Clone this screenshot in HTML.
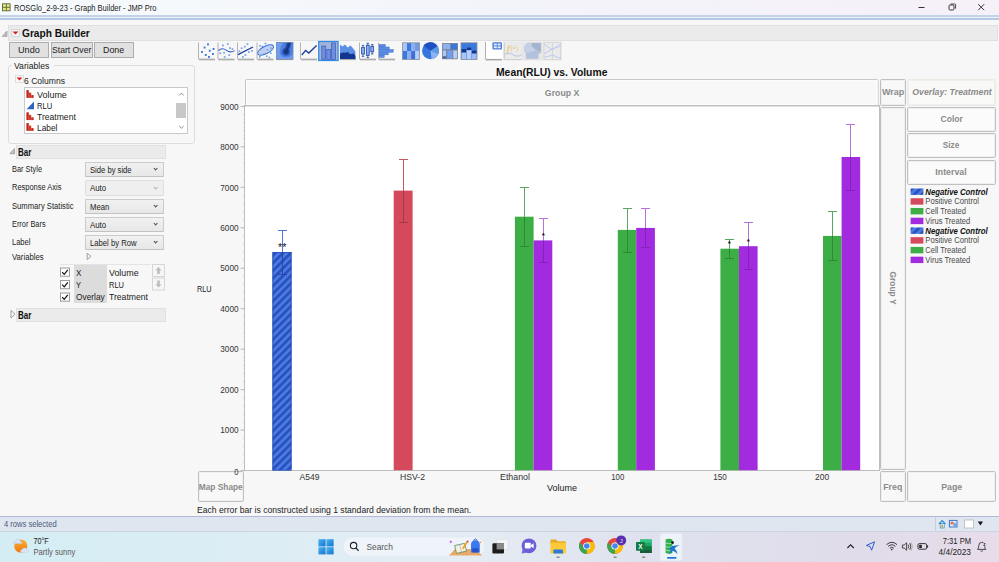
<!DOCTYPE html>
<html>
<head>
<meta charset="utf-8">
<title>ROSGlo_2-9-23 - Graph Builder - JMP Pro</title>
<style>
*{box-sizing:border-box;margin:0;padding:0}
html,body{width:999px;height:562px;overflow:hidden;background:#f7f7f7;font-family:"Liberation Sans",sans-serif;color:#222}
#root{position:absolute;left:0;top:0;width:999px;height:562px;overflow:hidden}
.abs{position:absolute}
.t{position:absolute;white-space:nowrap;line-height:1}
.sx{display:inline-block;transform-origin:0 50%;white-space:nowrap}
#titlebar{left:0;top:0;width:999px;height:15px;background:linear-gradient(90deg,#f7fbfd 0%,#f3f4fa 50%,#f6f0f8 100%)}
#tline{left:0;top:14.5px;width:999px;height:5px;background:linear-gradient(180deg,#c3d3e8 0%,#c3d3e8 30%,#eef3f8 31%,#eef3f8 60%,#b3c8e2 61%,#b3c8e2 100%)}
#content{left:0;top:19.5px;width:999px;height:497px;background:#f7f7f7}
.hdr{position:absolute;background:#ebebeb;border:1px solid #e0e0e0}
.btn .sx{position:absolute;top:-0.2px}
.btn{position:absolute;height:15.6px;top:42.4px;background:#e1e1e1;border:1px solid #adadad;font-size:9.6px;text-align:left;line-height:13.6px;color:#222;white-space:nowrap;overflow:hidden}
.dd{position:absolute;left:85px;width:79px;height:15.2px;background:linear-gradient(#f1f1f1,#e7e7e7);border:1px solid #cbcbcb;border-bottom-color:#c2c2c2;border-radius:1px;font-size:8.5px;line-height:14.2px;padding-left:4.4px;color:#222}
.dd:after{content:"";position:absolute;right:6px;top:4.2px;width:2.3px;height:2.3px;border-right:0.8px solid #505050;border-bottom:0.8px solid #505050;transform:rotate(45deg)}
.dd.dis{background:#efefef;border-color:#dedede}.dd.dis:after{border-color:#b5b5b5}
.lbl{position:absolute;left:12px;font-size:8.5px;color:#222;white-space:nowrap;line-height:1}
.zone{position:absolute;border-radius:1.5px;background:#f8f8f8;border:1px solid #c0c0c0;box-shadow:inset 0 0 0 1px #efefef;color:#8a8a8a;font-weight:bold;font-size:9px;display:flex;align-items:center;justify-content:center;white-space:nowrap;padding-bottom:1px}
#status{left:0;top:516px;width:999px;height:15px;background:#e0e6f0;border-top:1px solid #b0b8da}
#taskbar{left:0;top:531px;width:999px;height:31px;background:linear-gradient(90deg,#d4edf4 0%,#dcedf4 25%,#e4edf4 45%,#dfe2ee 65%,#e0dcea 85%,#e8dcea 100%);border-top:1px solid #ccd4e0}
</style>
</head>
<body>
<div id="root">
<div id="titlebar" class="abs"></div>
<div id="tline" class="abs"></div>
<div id="content" class="abs"></div>
<!--TITLE-->
<!--LEFT-->
<!-- title bar -->
<svg class="abs" style="left:2px;top:3px" width="10" height="10" viewBox="0 0 10 10"><rect x="0.5" y="0.8" width="7.6" height="7" fill="#e6ea8a" stroke="#5a6430" stroke-width="0.9"/><path d="M0.5 4.3H8.1M4.3 0.8V7.8" stroke="#5a6430" stroke-width="0.9"/></svg>
<div class="t" style="left:14px;top:3.6px;font-size:8.5px;color:#222"><span class="sx" style="transform:scaleX(0.8848)">ROSGlo_2-9-23 - Graph Builder - JMP Pro</span></div>
<svg class="abs" style="left:910px;top:0" width="89" height="16" viewBox="0 0 89 16" fill="none" stroke="#333" stroke-width="1"><path d="M8.5 7.5H14.5"/><rect x="39" y="5" width="5" height="5" rx="1.2"/><path d="M40.5 4H44.6Q45.6 4 45.6 5V8.6" stroke-width="0.9"/><path d="M68.2 4.2L74.2 10.2M74.2 4.2L68.2 10.2"/></svg>
<!-- graph builder header -->
<div class="hdr" style="left:8px;top:25px;width:990px;height:15.6px"></div>
<svg class="abs" style="left:0;top:28px" width="22" height="12" viewBox="0 0 22 12"><path d="M2.2 8.4L7 3V8.4Z" fill="#bcbcbc" stroke="#8e8e8e" stroke-width="0.6"/><rect x="11.5" y="1.5" width="8" height="7" fill="#f4f4f4" stroke="#d8d8d8"/><path d="M12.6 3.6H18.4L15.5 6.6Z" fill="#d81e1e"/></svg>
<div class="t" style="left:21.6px;top:28.2px;font-size:10.6px;font-weight:bold;color:#111"><span class="sx" style="transform:scaleX(0.9598)">Graph Builder</span></div>
<div class="btn" style="left:9px;width:40px"><span class="sx" style="transform:scaleX(0.9504);left:7.8px">Undo</span></div>
<div class="btn" style="left:51px;width:42px"><span class="sx" style="transform:scaleX(0.8989);left:0.2px">Start Over</span></div>
<div class="btn" style="left:94px;width:40px"><span class="sx" style="transform:scaleX(0.9243);left:8.2px">Done</span></div>
<!-- variables group -->
<div class="abs" style="left:8px;top:65px;width:187px;height:79px;border:1px solid #dcdcdc;border-radius:3px"></div>
<div class="t" style="left:11.6px;top:60.8px;font-size:9.4px;background:#f7f7f7;padding:0 2px;color:#222"><span class="sx" style="transform:scaleX(0.9221)">Variables</span></div>
<svg class="abs" style="left:15px;top:75px" width="9" height="9" viewBox="0 0 9 9"><rect x="0.5" y="0.5" width="8" height="7" fill="#f7f7f7" stroke="#dedede"/><path d="M1.6 2.4H7.4L4.5 5.4Z" fill="#d81e1e"/></svg>
<div class="t" style="left:24px;top:76px;font-size:9.4px;color:#222"><span class="sx" style="transform:scaleX(0.9149)">6 Columns</span></div>
<div class="abs" style="left:24px;top:87px;width:164px;height:47px;background:#fff;border:1px solid #c9c9c9"></div>
<div class="abs" style="left:176px;top:103px;width:10px;height:15px;background:#c8c8c8"></div>
<svg class="abs" style="left:176px;top:88px" width="11" height="45" viewBox="0 0 11 45" fill="none" stroke="#777" stroke-width="0.9"><path d="M3.2 7.4L5.4 5.2L7.6 7.4"/><path d="M3.2 38L5.4 40.2L7.6 38"/></svg>
<svg class="abs" style="left:26px;top:89px" width="10" height="44" viewBox="0 0 10 44">
<path d="M0.4 1.1H2.8V8.9H0.4Z" fill="#c4241a"/><path d="M2.8 3.6H5.2V8.9H2.8Z" fill="#d03a28"/><path d="M5.2 6.1H7.6V8.9H5.2Z" fill="#c4241a"/><path d="M0.4 23.3H2.8V31.1H0.4Z" fill="#c4241a"/><path d="M2.8 25.8H5.2V31.1H2.8Z" fill="#d03a28"/><path d="M5.2 28.3H7.6V31.1H5.2Z" fill="#c4241a"/><path d="M0.4 34.1H2.8V41.9H0.4Z" fill="#c4241a"/><path d="M2.8 36.6H5.2V41.9H2.8Z" fill="#d03a28"/><path d="M5.2 39.1H7.6V41.9H5.2Z" fill="#c4241a"/>
<path d="M0.6 20.2L8 12.4V20.2Z" fill="#2f63c0"/></svg>
<div class="t" style="left:37px;top:90px;font-size:9.4px"><span class="sx" style="transform:scaleX(0.9526)">Volume</span></div>
<div class="t" style="left:37px;top:101px;font-size:9.4px"><span class="sx" style="transform:scaleX(0.8100)">RLU</span></div>
<div class="t" style="left:37px;top:112px;font-size:9.4px"><span class="sx" style="transform:scaleX(0.9156)">Treatment</span></div>
<div class="t" style="left:37px;top:123px;font-size:9.4px"><span class="sx" style="transform:scaleX(0.8888)">Label</span></div>
<!-- Bar section -->
<div class="hdr" style="left:16px;top:145px;width:150px;height:14px"></div>
<svg class="abs" style="left:9px;top:147px" width="8" height="9" viewBox="0 0 8 9"><path d="M0.8 6.8L5.6 1.4V6.8Z" fill="#bcbcbc" stroke="#8e8e8e" stroke-width="0.6"/></svg>
<div class="t" style="left:18px;top:147.8px;font-size:10.4px;font-weight:bold;color:#111"><span class="sx" style="transform:scaleX(0.7733)">Bar</span></div>
<div class="lbl" style="top:165.4px"><span class="sx" style="transform:scaleX(0.8696)">Bar Style</span></div><div class="dd" style="top:162.1px"><span class="sx" style="transform:scaleX(0.8982)">Side by side</span></div>
<div class="lbl" style="top:183.2px"><span class="sx" style="transform:scaleX(0.8785)">Response Axis</span></div><div class="dd dis" style="top:180.4px"><span class="sx" style="transform:scaleX(0.9257)">Auto</span></div>
<div class="lbl" style="top:201.5px"><span class="sx" style="transform:scaleX(0.8993)">Summary Statistic</span></div><div class="dd" style="top:198.7px"><span class="sx" style="transform:scaleX(0.9029)">Mean</span></div>
<div class="lbl" style="top:219.5px"><span class="sx" style="transform:scaleX(0.8674)">Error Bars</span></div><div class="dd" style="top:217px"><span class="sx" style="transform:scaleX(0.9257)">Auto</span></div>
<div class="lbl" style="top:237.5px"><span class="sx" style="transform:scaleX(0.8841)">Label</span></div><div class="dd" style="top:235.2px"><span class="sx" style="transform:scaleX(0.9046)">Label by Row</span></div>
<div class="lbl" style="top:252.5px"><span class="sx" style="transform:scaleX(0.9077)">Variables</span></div>
<svg class="abs" style="left:86px;top:252px" width="7" height="9" viewBox="0 0 7 9"><path d="M1.2 1.2L5 4.4L1.2 7.6Z" fill="#f8f8f8" stroke="#8a8a8a" stroke-width="0.8"/></svg>
<div class="abs" style="left:60px;top:264px;width:91px;height:1px;background:#e4e4e4"></div>
<div class="abs" style="left:74px;top:265px;width:33px;height:38px;background:#dcdcdc"></div>
<svg class="abs" style="left:60px;top:266.5px" width="10" height="36" viewBox="0 0 10 36" fill="none"><g stroke="#9c9c9c" fill="#fff"><rect x="0.5" y="1" width="9" height="8.2"/><rect x="0.5" y="13.5" width="9" height="8.2"/><rect x="0.5" y="26" width="9" height="8.2"/></g><g stroke="#111" stroke-width="1.2"><path d="M2.2 5.2L4.2 7.4L7.8 2.8"/><path d="M2.2 17.7L4.2 19.9L7.8 15.3"/><path d="M2.2 30.2L4.2 32.4L7.8 27.8"/></g></svg>
<div class="t" style="left:76px;top:268.0px;font-size:9.6px"><span class="sx" style="transform:scaleX(0.8429)">X</span></div><div class="t" style="left:109px;top:268.0px;font-size:9.6px"><span class="sx" style="transform:scaleX(0.9250)">Volume</span></div>
<div class="t" style="left:76px;top:280.0px;font-size:9.6px"><span class="sx" style="transform:scaleX(0.7805)">Y</span></div><div class="t" style="left:109px;top:280.0px;font-size:9.6px"><span class="sx" style="transform:scaleX(0.7811)">RLU</span></div>
<div class="t" style="left:76px;top:292.3px;font-size:9.6px"><span class="sx" style="transform:scaleX(0.8711)">Overlay</span></div><div class="t" style="left:109px;top:292.3px;font-size:9.6px"><span class="sx" style="transform:scaleX(0.8991)">Treatment</span></div>
<svg class="abs" style="left:152px;top:263.5px" width="14" height="27" viewBox="0 0 14 27"><g fill="#f6f6f6" stroke="#d6d6d6"><rect x="0.5" y="0.5" width="12" height="12"/><rect x="0.5" y="14" width="12" height="12"/></g><g fill="#bdbdbd"><path d="M6.5 3L9.6 6.4H7.8V10H5.2V6.4H3.4Z"/><path d="M6.5 23.6L9.6 20.2H7.8V16.6H5.2V20.2H3.4Z"/></g></svg>
<div class="hdr" style="left:16px;top:308px;width:150px;height:14px"></div>
<svg class="abs" style="left:9px;top:309px" width="8" height="11" viewBox="0 0 8 11"><path d="M2 1.4L6 5.2L2 9Z" fill="#f8f8f8" stroke="#8a8a8a" stroke-width="0.8"/></svg>
<div class="t" style="left:18px;top:310.6px;font-size:10.4px;font-weight:bold;color:#111"><span class="sx" style="transform:scaleX(0.7733)">Bar</span></div>
<!--/LEFT-->
<!--TOOLBAR-->
<svg class="abs" style="left:195px;top:40px" width="372" height="23" viewBox="195 40 372 23">
<defs>
<g id="ax"><path d="M0.5 0V16.6H17" fill="none" stroke="#b4b4b4" stroke-width="1"/><path d="M1 17.3H17" stroke="#909090" stroke-width="0.8"/></g>
</defs>
<!-- 1 scatter -->
<rect x="198" y="42.5" width="17" height="17" fill="#f7f7f7"/><use href="#ax" x="198" y="42.5"/>
<g fill="#3b78dc"><rect x="207" y="43.4" width="1.9" height="1.9"/><rect x="203.6" y="46.6" width="1.9" height="1.9"/><rect x="212.6" y="48" width="1.9" height="1.9"/><rect x="208.8" y="49.8" width="1.9" height="1.9"/><rect x="201" y="51" width="1.9" height="1.9"/><rect x="212" y="53" width="1.9" height="1.9"/><rect x="204.8" y="54" width="1.9" height="1.9"/><rect x="208" y="56" width="1.9" height="1.9"/></g>
<!-- 2 smoother -->
<rect x="217.5" y="42.5" width="17" height="17" fill="#f7f7f7"/><use href="#ax" x="217.5" y="42.5"/>
<g fill="#6f9fe8"><rect x="227" y="43.2" width="1.7" height="1.7"/><rect x="222" y="44.6" width="1.7" height="1.7"/><rect x="229" y="47.2" width="1.7" height="1.7"/><rect x="231.6" y="48.2" width="1.7" height="1.7"/><rect x="219.4" y="52.4" width="1.7" height="1.7"/><rect x="223.2" y="51.8" width="1.7" height="1.7"/><rect x="228.4" y="54.2" width="1.7" height="1.7"/><rect x="223.8" y="56.2" width="1.7" height="1.7"/></g>
<path d="M218.4 50.6C221 48 224 48.6 226.5 50.4S232 52.4 234.6 50.6" fill="none" stroke="#2f5fc0" stroke-width="1.1"/>
<!-- 3 line of fit -->
<rect x="237" y="42.5" width="17" height="17" fill="#f7f7f7"/><use href="#ax" x="237" y="42.5"/>
<g fill="#6f9fe8"><rect x="246.6" y="43.2" width="1.7" height="1.7"/><rect x="244" y="45.8" width="1.7" height="1.7"/><rect x="240.8" y="47.4" width="1.7" height="1.7"/><rect x="251.2" y="50" width="1.7" height="1.7"/><rect x="248" y="51.2" width="1.7" height="1.7"/><rect x="238.6" y="50.4" width="1.7" height="1.7"/><rect x="244.6" y="54.2" width="1.7" height="1.7"/><rect x="242" y="56.2" width="1.7" height="1.7"/></g>
<path d="M238 54.6L253 47" stroke="#1d3f9e" stroke-width="1.3"/>
<!-- 4 ellipse -->
<rect x="256.5" y="42.5" width="17" height="17" fill="#f7f7f7"/><use href="#ax" x="256.5" y="42.5"/>
<g fill="#6f9fe8"><rect x="264.6" y="42.6" width="1.6" height="1.6"/><rect x="259.2" y="45" width="1.6" height="1.6"/><rect x="261.6" y="45.8" width="1.6" height="1.6"/><rect x="270.4" y="47.4" width="1.6" height="1.6"/><rect x="266.6" y="49" width="1.6" height="1.6"/><rect x="263" y="53.4" width="1.6" height="1.6"/><rect x="259" y="56" width="1.6" height="1.6"/><rect x="266" y="55.4" width="1.6" height="1.6"/><rect x="268.6" y="56.8" width="1.6" height="1.6"/><rect x="270" y="52.4" width="1.6" height="1.6"/></g>
<ellipse cx="265.6" cy="50" rx="8.8" ry="3.7" transform="rotate(-27 265.6 50)" fill="#8eb0ee" fill-opacity="0.55" stroke="#3a72d8" stroke-width="1"/>
<!-- 5 contour -->
<rect x="276.5" y="42.5" width="16.5" height="17" fill="#6f9cee"/>
<path d="M283 42.5H293V53Q291 57.5 286 57.5Q280 57 279.6 52Q280 47.5 283 42.5Z" fill="#4f80e0"/>
<path d="M286.4 42.5H291.6Q290.6 47 289.4 49.6Q291 53.6 287.6 55.6Q283.4 56.6 282 53Q281.8 49.6 285 47.6Z" fill="#2a55b4"/>
<path d="M288 42.5H290.4Q289.6 46.8 288 49.4Q289.6 52.6 286.8 54Q283.6 54.4 283.6 51.6Q284.4 49.4 286.6 48.4Z" fill="#16347e"/>
<rect x="276.5" y="42.5" width="16.5" height="17" fill="none" stroke="#6a86b8" stroke-width="0.8"/>
<path d="M276.5 59.6H293" stroke="#909090" stroke-width="0.8"/>
<!-- 6 line -->
<rect x="300" y="42.5" width="17" height="17" fill="#f7f7f7"/><use href="#ax" x="300" y="42.5"/>
<path d="M301.8 55L305.6 50.4L308.8 53L316.6 45.6" fill="none" stroke="#1d3f9e" stroke-width="1.4"/>
<!-- 7 bar selected -->
<rect x="318.7" y="41.5" width="19.4" height="19" fill="#a3b3d6" stroke="#2f8ae6" stroke-width="1.2"/>
<g fill="#6f8fdc" stroke="#3f63c4" stroke-width="0.8"><rect x="321.8" y="46" width="3.8" height="13.4"/><rect x="326.8" y="49.4" width="3.8" height="10"/><rect x="331.6" y="43" width="3.8" height="16.4"/></g>
<!-- 8 area -->
<path d="M340 44.4L342.4 46.6L345 44.6L347.6 47.4L350.6 45.4L354 49.6L355.4 51.4V59H340Z" fill="#5b8fe6"/>
<path d="M340 53.4L343 52.4L346 52.8L347.6 51.8L349.4 53.8L351.8 54L353.6 53.2L355.4 56V59H340Z" fill="#12358e"/>
<path d="M340 59.6H356" stroke="#9a9a9a" stroke-width="0.9"/>
<!-- 9 box plot -->
<rect x="359" y="42.5" width="17" height="17" fill="#f7f7f7"/><use href="#ax" x="359" y="42.5"/>
<g stroke="#2f55b0" stroke-width="0.9" fill="#8fb2f2"><path d="M363 45.4V56.4M361.8 45.4H364.2M361.8 56.4H364.2M367.8 43.2V57.6M366.6 43.2H369M366.6 57.6H369M372.2 44.6V54M371 44.6H373.4M371 54H373.4" fill="none"/><rect x="361.6" y="47.4" width="2.8" height="6.6"/><rect x="366.4" y="45.2" width="2.8" height="10.2"/><rect x="370.8" y="46.4" width="2.8" height="5.4"/></g>
<!-- 10 histogram -->
<rect x="378" y="42.5" width="17" height="17" fill="#f7f7f7"/><use href="#ax" x="378" y="42.5"/>
<g fill="#5b8fe6" stroke="#3b6cd0" stroke-width="0.5"><rect x="379.2" y="44.4" width="6" height="2.4"/><rect x="379.2" y="47" width="10" height="2.4"/><rect x="379.2" y="49.6" width="14" height="2.6"/><rect x="379.2" y="52.4" width="9" height="2.4"/><rect x="379.2" y="55" width="5" height="2.4"/></g>
<!-- 11 heatmap -->
<g><rect x="402.5" y="42.8" width="17" height="16.6" fill="#7fa6ee"/>
<rect x="402.8" y="43" width="4.2" height="8" fill="#a9c6fa"/><rect x="407" y="43" width="4.2" height="8" fill="#3b78dc"/><rect x="411.2" y="43" width="4" height="8" fill="#8db0f2"/><rect x="415.2" y="43" width="4" height="8" fill="#6f9ae6"/>
<rect x="402.8" y="51" width="4.2" height="8.2" fill="#3b78dc"/><rect x="407" y="51" width="4.2" height="8.2" fill="#8db0f2"/><rect x="411.2" y="51" width="4" height="8.2" fill="#3f70d0"/><rect x="415.2" y="51" width="4" height="8.2" fill="#b5cefa"/>
<rect x="402.5" y="42.8" width="17" height="16.6" fill="none" stroke="#8a8f9a" stroke-width="0.8"/></g>
<!-- 12 pie -->
<circle cx="430.5" cy="50.8" r="8.5" fill="#3577de"/>
<path d="M430.5 50.8L423.6 45.8A8.5 8.5 0 0 1 437.6 46.2Z" fill="#1f52c0"/>
<path d="M430.5 50.8L437.6 46.2A8.5 8.5 0 0 1 438.4 54Z" fill="#5f9ae8"/>
<path d="M430.5 50.8L438.4 54A8.5 8.5 0 0 1 431.6 59.2Z" fill="#8cb4f4"/>
<!-- 13 treemap -->
<g stroke="#7a7f8a" stroke-width="0.8"><rect x="442.4" y="43.4" width="8.4" height="6.6" fill="#8db0f2"/><rect x="450.8" y="43.4" width="6.8" height="6.6" fill="#3577de"/><rect x="442.4" y="50" width="4.4" height="6.4" fill="#a9c6fa"/><rect x="442.4" y="56.4" width="4.4" height="2.4" fill="#2a62cc"/><rect x="446.8" y="50" width="6" height="8.8" fill="#6fa0f0"/><rect x="452.8" y="50" width="4.8" height="8.8" fill="#b5cefa"/></g>
<!-- 14 mosaic -->
<g><rect x="461" y="42.8" width="16" height="16.6" fill="#3b78dc"/>
<rect x="461.4" y="43" width="5" height="6" fill="#3b78dc"/><rect x="461.4" y="49" width="5" height="3.6" fill="#12358e"/><rect x="461.4" y="52.6" width="5" height="6.6" fill="#a9c6fa"/>
<rect x="466.6" y="43" width="5" height="4.6" fill="#3b78dc"/><rect x="466.6" y="47.6" width="5" height="2.6" fill="#12358e"/><rect x="466.6" y="50.2" width="5" height="9" fill="#b5cefa"/>
<rect x="471.8" y="43" width="5" height="7.6" fill="#3b78dc"/><rect x="471.8" y="50.6" width="5" height="3" fill="#12358e"/><rect x="471.8" y="53.6" width="5" height="5.6" fill="#9dbcf6"/>
<rect x="461" y="42.8" width="16" height="16.6" fill="none" stroke="#8a8f9a" stroke-width="0.8"/><path d="M466.5 43V59.2M471.7 43V59.2" stroke="#5f88d8" stroke-width="0.4"/></g>
<!-- 15 caption box -->
<rect x="485" y="42" width="17.4" height="17.6" fill="#ffffff"/><path d="M485.5 42V59.4H502" fill="none" stroke="#b0b0b0"/><path d="M486 59.9H502" stroke="#909090" stroke-width="0.8"/>
<rect x="492.4" y="42.2" width="9.6" height="7.4" rx="1" fill="#4f7fd8"/><g fill="#e8f0ff"><rect x="493.8" y="43.6" width="3" height="1.8"/><rect x="497.6" y="43.6" width="3" height="1.8"/><rect x="493.8" y="46.4" width="3" height="1.8"/><rect x="497.6" y="46.4" width="3" height="1.8"/></g>
<!-- disabled group -->
<rect x="503" y="41.5" width="59" height="19" fill="#e7e7e7"/>
<rect x="504.5" y="42.5" width="17" height="17" fill="#ebebeb"/><path d="M504.5 42.5V59.5H521.5" fill="none" stroke="#d0d0d0"/>
<text x="506.8" y="52" font-family="Liberation Serif, serif" font-style="italic" font-weight="bold" font-size="10" fill="#e4cf8a">f</text><text x="510.6" y="51.4" font-family="Liberation Serif, serif" font-size="7.5" fill="#e4cf8a">(•)</text>
<path d="M505 54.6C508 52.4 511 53.4 513.6 55S519 56.4 521.6 54.8" fill="none" stroke="#aebfe2" stroke-width="0.9"/>
<path d="M527.4 43H540.8V52.4L538.2 54.4V58.8H526V53.4L524.6 51V46Z" fill="#b0c2e0" stroke="#c6c6c6" stroke-width="0.6"/>
<path d="M531.4 43H540.8V52L536.4 50.4L531.8 46.6Z" fill="#a3b3d2"/>
<path d="M527.4 43H531.4L531.8 46.6L536.4 50.4L526.4 53.6L524.6 51V46Z" fill="#c2d0ea"/>
<path d="M531.4 43L531.8 46.6L536.4 50.4L540.8 52M536.4 50.4L526.4 53.6" fill="none" stroke="#c6c6c6" stroke-width="0.7"/>
<rect x="544" y="42.6" width="16.6" height="16.8" fill="#ebebeb" stroke="#d4d4d4" stroke-width="0.8"/><path d="M552.4 42.6V59.4" stroke="#d0d0d0" stroke-width="0.8"/>
<path d="M544 44L552.4 50L560.6 43.6M544 54L552.4 48.6L560.6 46.4M544 57.4L552.4 55.2L560.6 58.4" fill="none" stroke="#b5c8ec" stroke-width="0.9"/>
</svg>
<!--/TOOLBAR-->
<!--CHART-->
<div class="zone" style="left:880px;top:79.4px;width:26px;height:26.2px"><span class="sx" style="transform:scaleX(1.0025);transform-origin:50% 50%">Wrap</span></div>
<div class="zone" style="left:907px;top:79.4px;width:89px;height:26.2px;font-style:italic;border-color:#ecece4;background:#f9f9f8"><span class="sx" style="transform:scaleX(0.9698);transform-origin:50% 50%">Overlay: Treatment</span></div>
<div class="zone" style="left:880px;top:107px;width:26px;height:363px"><span style="transform:rotate(90deg);display:block"><span class="sx" style="transform:scaleX(0.9393);transform-origin:50% 50%">Group Y</span></span></div>
<div class="zone" style="left:907px;top:106.6px;width:89px;height:25.2px;background:#fbfbfb"><span class="sx" style="transform:scaleX(0.9532);transform-origin:50% 50%">Color</span></div>
<div class="zone" style="left:907px;top:133px;width:89px;height:25px;background:#fbfbfb"><span class="sx" style="transform:scaleX(0.9103);transform-origin:50% 50%">Size</span></div>
<div class="zone" style="left:907px;top:160px;width:89px;height:25px;background:#fbfbfb"><span class="sx" style="transform:scaleX(0.9808);transform-origin:50% 50%">Interval</span></div>
<div class="zone" style="left:880px;top:471px;width:26px;height:31px;padding-bottom:0;padding-top:1.6px"><span class="sx" style="transform:scaleX(0.9736);transform-origin:50% 50%">Freq</span></div>
<div class="zone" style="left:907px;top:471px;width:89px;height:31px;padding-bottom:0;padding-top:1.6px"><span class="sx" style="transform:scaleX(0.9760);transform-origin:50% 50%">Page</span></div>
<div class="zone" style="left:198px;top:471px;width:46px;height:31px;padding-bottom:0;padding-top:1.6px"><span class="sx" style="transform:scaleX(0.9260);transform-origin:50% 50%">Map Shape</span></div>
<svg class="abs" style="left:0;top:0" width="999" height="562" viewBox="0 0 999 562" font-family="Liberation Sans, sans-serif">
<defs>
<pattern id="hatch" width="5.4" height="5.4" patternUnits="userSpaceOnUse" patternTransform="rotate(-45 272 252)">
<rect width="5.4" height="5.4" fill="#4a7ae6"/><rect y="0" width="5.4" height="2.6" fill="#2850ba"/>
</pattern>
</defs>
<!-- group X header -->
<rect x="245.5" y="79.6" width="632.6" height="25.9" rx="1" fill="#f8f8f8" stroke="#c4c4c4"/>
<rect x="246.5" y="80.6" width="630.6" height="23.9" fill="none" stroke="#fdfdfd"/>
<text x="562.1" y="95.6" font-size="9" font-weight="bold" fill="#8a8a8a" text-anchor="middle" textLength="34.5" lengthAdjust="spacingAndGlyphs">Group X</text>
<!-- plot -->
<rect x="244.5" y="105.5" width="635" height="365" fill="#ffffff" stroke="#bdbdbd"/>
<line x1="245" y1="105.8" x2="880" y2="105.8" stroke="#c0c0c0" stroke-width="1.2"/>
<!-- title -->
<text x="551.7" y="75.6" font-size="10.2" font-weight="bold" fill="#111" text-anchor="middle" textLength="111.4" lengthAdjust="spacingAndGlyphs">Mean(RLU) vs. Volume</text>
<!-- y ticks -->
<g font-size="9" fill="#333" text-anchor="end">
<text x="238.6" y="474.6" textLength="4.3" lengthAdjust="spacingAndGlyphs">0</text>
<text x="238.6" y="433.3" textLength="18.3" lengthAdjust="spacingAndGlyphs">1000</text>
<text x="238.6" y="392.9" textLength="18.3" lengthAdjust="spacingAndGlyphs">2000</text>
<text x="238.6" y="352.4" textLength="18.3" lengthAdjust="spacingAndGlyphs">3000</text>
<text x="238.6" y="311.9" textLength="18.3" lengthAdjust="spacingAndGlyphs">4000</text>
<text x="238.6" y="271.4" textLength="18.3" lengthAdjust="spacingAndGlyphs">5000</text>
<text x="238.6" y="231.0" textLength="18.3" lengthAdjust="spacingAndGlyphs">6000</text>
<text x="238.6" y="190.5" textLength="18.3" lengthAdjust="spacingAndGlyphs">7000</text>
<text x="238.6" y="150.0" textLength="18.3" lengthAdjust="spacingAndGlyphs">8000</text>
<text x="238.6" y="109.6" textLength="18.3" lengthAdjust="spacingAndGlyphs">9000</text>
</g>
<g stroke="#b4b4b4" stroke-width="1"><line x1="240.6" y1="470.6" x2="244.6" y2="470.6"/><line x1="243" y1="462.5" x2="244.6" y2="462.5" stroke="#cfcfcf"/><line x1="243" y1="454.4" x2="244.6" y2="454.4" stroke="#cfcfcf"/><line x1="243" y1="446.3" x2="244.6" y2="446.3" stroke="#cfcfcf"/><line x1="243" y1="438.2" x2="244.6" y2="438.2" stroke="#cfcfcf"/><line x1="240.6" y1="430.1" x2="244.6" y2="430.1"/><line x1="243" y1="422.0" x2="244.6" y2="422.0" stroke="#cfcfcf"/><line x1="243" y1="413.9" x2="244.6" y2="413.9" stroke="#cfcfcf"/><line x1="243" y1="405.8" x2="244.6" y2="405.8" stroke="#cfcfcf"/><line x1="243" y1="397.8" x2="244.6" y2="397.8" stroke="#cfcfcf"/><line x1="240.6" y1="389.7" x2="244.6" y2="389.7"/><line x1="243" y1="381.6" x2="244.6" y2="381.6" stroke="#cfcfcf"/><line x1="243" y1="373.5" x2="244.6" y2="373.5" stroke="#cfcfcf"/><line x1="243" y1="365.4" x2="244.6" y2="365.4" stroke="#cfcfcf"/><line x1="243" y1="357.3" x2="244.6" y2="357.3" stroke="#cfcfcf"/><line x1="240.6" y1="349.2" x2="244.6" y2="349.2"/><line x1="243" y1="341.1" x2="244.6" y2="341.1" stroke="#cfcfcf"/><line x1="243" y1="333.0" x2="244.6" y2="333.0" stroke="#cfcfcf"/><line x1="243" y1="324.9" x2="244.6" y2="324.9" stroke="#cfcfcf"/><line x1="243" y1="316.8" x2="244.6" y2="316.8" stroke="#cfcfcf"/><line x1="240.6" y1="308.7" x2="244.6" y2="308.7"/><line x1="243" y1="300.6" x2="244.6" y2="300.6" stroke="#cfcfcf"/><line x1="243" y1="292.5" x2="244.6" y2="292.5" stroke="#cfcfcf"/><line x1="243" y1="284.4" x2="244.6" y2="284.4" stroke="#cfcfcf"/><line x1="243" y1="276.3" x2="244.6" y2="276.3" stroke="#cfcfcf"/><line x1="240.6" y1="268.2" x2="244.6" y2="268.2"/><line x1="243" y1="260.2" x2="244.6" y2="260.2" stroke="#cfcfcf"/><line x1="243" y1="252.1" x2="244.6" y2="252.1" stroke="#cfcfcf"/><line x1="243" y1="244.0" x2="244.6" y2="244.0" stroke="#cfcfcf"/><line x1="243" y1="235.9" x2="244.6" y2="235.9" stroke="#cfcfcf"/><line x1="240.6" y1="227.8" x2="244.6" y2="227.8"/><line x1="243" y1="219.7" x2="244.6" y2="219.7" stroke="#cfcfcf"/><line x1="243" y1="211.6" x2="244.6" y2="211.6" stroke="#cfcfcf"/><line x1="243" y1="203.5" x2="244.6" y2="203.5" stroke="#cfcfcf"/><line x1="243" y1="195.4" x2="244.6" y2="195.4" stroke="#cfcfcf"/><line x1="240.6" y1="187.3" x2="244.6" y2="187.3"/><line x1="243" y1="179.2" x2="244.6" y2="179.2" stroke="#cfcfcf"/><line x1="243" y1="171.1" x2="244.6" y2="171.1" stroke="#cfcfcf"/><line x1="243" y1="163.0" x2="244.6" y2="163.0" stroke="#cfcfcf"/><line x1="243" y1="154.9" x2="244.6" y2="154.9" stroke="#cfcfcf"/><line x1="240.6" y1="146.8" x2="244.6" y2="146.8"/><line x1="243" y1="138.7" x2="244.6" y2="138.7" stroke="#cfcfcf"/><line x1="243" y1="130.7" x2="244.6" y2="130.7" stroke="#cfcfcf"/><line x1="243" y1="122.6" x2="244.6" y2="122.6" stroke="#cfcfcf"/><line x1="243" y1="114.5" x2="244.6" y2="114.5" stroke="#cfcfcf"/><line x1="240.6" y1="106.4" x2="244.6" y2="106.4"/></g>
<text x="197" y="292" font-size="9" fill="#222" textLength="14.6" lengthAdjust="spacingAndGlyphs">RLU</text>
<!-- bars -->
<rect x="272.4" y="252" width="19.2" height="218.2" fill="url(#hatch)"/><rect x="272.9" y="252.5" width="18.2" height="217.7" fill="none" stroke="#2a52b8" stroke-width="0.9"/>
<rect x="393.7" y="190.6" width="18.9" height="279.6" fill="#d4495b"/>
<rect x="514.9" y="216.7" width="18.7" height="253.5" fill="#3cae45"/>
<rect x="533.6" y="240.4" width="18.7" height="229.8" fill="#a22bdf"/>
<rect x="617.8" y="229.9" width="18.4" height="240.3" fill="#3cae45"/>
<rect x="636.2" y="227.9" width="18.7" height="242.3" fill="#a22bdf"/>
<rect x="720.4" y="248.7" width="18.6" height="221.5" fill="#3cae45"/>
<rect x="739" y="246.2" width="18.6" height="224.0" fill="#a22bdf"/>
<rect x="823" y="235.9" width="18.6" height="234.3" fill="#3cae45"/>
<rect x="841.6" y="157" width="18.6" height="313.2" fill="#a22bdf"/>
<!-- error bars -->
<g fill="none" stroke-width="1">
<path d="M282.5 230.5V252M278.0 230.5H287.0" stroke="#5577d5"/>
<path d="M282.5 252V274.5M278.0 274.5H287.0" stroke="#2645a4"/>
<path d="M403.5 159.5V190.6M399.0 159.5H408.0" stroke="#c65565"/>
<path d="M403.5 190.6V222.5M399.0 222.5H408.0" stroke="#a83848"/>
<path d="M524.5 187.5V216.7M520.0 187.5H529.0" stroke="#5aa660"/>
<path d="M524.5 216.7V246.5M520.0 246.5H529.0" stroke="#2e8836"/>
<path d="M543.5 218.5V240.4M539.0 218.5H548.0" stroke="#b274dc"/>
<path d="M543.5 240.4V262.5M539.0 262.5H548.0" stroke="#8222b8"/>
<path d="M627.5 208.5V229.9M623.0 208.5H632.0" stroke="#5aa660"/>
<path d="M627.5 229.9V252.5M623.0 252.5H632.0" stroke="#2e8836"/>
<path d="M645.5 208.5V227.9M641.0 208.5H650.0" stroke="#b274dc"/>
<path d="M645.5 227.9V247.5M641.0 247.5H650.0" stroke="#8222b8"/>
<path d="M729.5 239.5V248.7M725.0 239.5H734.0" stroke="#5aa660"/>
<path d="M729.5 248.7V258.5M725.0 258.5H734.0" stroke="#2e8836"/>
<path d="M748.5 222.5V246.2M744.0 222.5H753.0" stroke="#b274dc"/>
<path d="M748.5 246.2V269.5M744.0 269.5H753.0" stroke="#8222b8"/>
<path d="M832.5 211.5V235.9M828.0 211.5H837.0" stroke="#5aa660"/>
<path d="M832.5 235.9V260.5M828.0 260.5H837.0" stroke="#2e8836"/>
<path d="M850.5 124.5V157M846.0 124.5H855.0" stroke="#b274dc"/>
<path d="M850.5 157V190.5M846.0 190.5H855.0" stroke="#8222b8"/>
</g>
<!-- point labels -->
<g font-size="8" font-weight="bold" fill="#111" text-anchor="middle">
<text x="282.2" y="251.4" font-size="10.8" font-weight="normal">**</text>
<text x="543.3" y="238.4" font-size="8">*</text>
<text x="729.4" y="246.4" font-size="8">*</text>
<text x="748.3" y="244" font-size="8">*</text>
</g>
<!-- x labels -->
<g font-size="9" fill="#333" text-anchor="middle">
<text x="309.5" y="479.9" textLength="20" lengthAdjust="spacingAndGlyphs">A549</text>
<text x="412.5" y="479.9" textLength="25" lengthAdjust="spacingAndGlyphs">HSV-2</text>
<text x="515" y="479.9" textLength="30" lengthAdjust="spacingAndGlyphs">Ethanol</text>
<text x="617.75" y="479.9" textLength="13" lengthAdjust="spacingAndGlyphs">100</text>
<text x="720" y="479.9" textLength="13.5" lengthAdjust="spacingAndGlyphs">150</text>
<text x="822.1" y="479.9" textLength="14.2" lengthAdjust="spacingAndGlyphs">200</text>
<text x="562" y="491" textLength="30" lengthAdjust="spacingAndGlyphs" fill="#222">Volume</text>
</g>
<text x="197" y="513" font-size="9" fill="#222" textLength="274.2" lengthAdjust="spacingAndGlyphs">Each error bar is constructed using 1 standard deviation from the mean.</text>
</svg>
<svg class="abs" style="left:905px;top:185px" width="94" height="85" viewBox="905 185 94 85" font-family="Liberation Sans, sans-serif" font-size="8.4">
<rect x="910.6" y="188.50" width="12.8" height="6.4" fill="url(#hatch)"/>
<text x="925.3" y="194.60" font-weight="bold" font-style="italic" fill="#111" textLength="62.4" lengthAdjust="spacingAndGlyphs">Negative Control</text>
<rect x="910.6" y="198.24" width="12.8" height="6.4" fill="#d4495b"/>
<text x="925.3" y="204.34" fill="#4a4a4a" textLength="53.6" lengthAdjust="spacingAndGlyphs">Positive Control</text>
<rect x="910.6" y="207.98" width="12.8" height="6.4" fill="#3cae45"/>
<text x="925.3" y="214.08" fill="#4a4a4a" textLength="40.6" lengthAdjust="spacingAndGlyphs">Cell Treated</text>
<rect x="910.6" y="217.72" width="12.8" height="6.4" fill="#a22bdf"/>
<text x="925.3" y="223.82" fill="#4a4a4a" textLength="44.9" lengthAdjust="spacingAndGlyphs">Virus Treated</text>
<rect x="910.6" y="227.46" width="12.8" height="6.4" fill="url(#hatch)"/>
<text x="925.3" y="233.56" font-weight="bold" font-style="italic" fill="#111" textLength="62.4" lengthAdjust="spacingAndGlyphs">Negative Control</text>
<rect x="910.6" y="237.20" width="12.8" height="6.4" fill="#d4495b"/>
<text x="925.3" y="243.30" fill="#4a4a4a" textLength="53.6" lengthAdjust="spacingAndGlyphs">Positive Control</text>
<rect x="910.6" y="246.94" width="12.8" height="6.4" fill="#3cae45"/>
<text x="925.3" y="253.04" fill="#4a4a4a" textLength="40.6" lengthAdjust="spacingAndGlyphs">Cell Treated</text>
<rect x="910.6" y="256.68" width="12.8" height="6.4" fill="#a22bdf"/>
<text x="925.3" y="262.78" fill="#4a4a4a" textLength="44.9" lengthAdjust="spacingAndGlyphs">Virus Treated</text>
</svg>
<!--/CHART-->
<div id="status" class="abs"></div>
<div id="taskbar" class="abs"></div>
<!--BOTTOM-->
<div class="t" style="left:4.4px;top:519.6px;font-size:8.6px;color:#4a587a"><span class="sx" style="transform:scaleX(0.8808)">4 rows selected</span></div>
<div class="abs" style="left:935px;top:517px;width:1px;height:14px;background:#c9cfdd"></div>
<svg class="abs" style="left:936px;top:517px" width="52" height="14" viewBox="936 517 52 14">
<path d="M939 524L942.2 520.6L945.4 524" fill="none" stroke="#2a8ad4" stroke-width="1.2"/><rect x="940.2" y="523.6" width="4" height="4.4" fill="#eef6fc" stroke="#2a8ad4" stroke-width="0.7"/><rect x="941.5" y="524.6" width="1.4" height="3" fill="#c89020"/>
<rect x="949.4" y="520.4" width="7.6" height="6.6" fill="#dfeaf8" stroke="#3a78c8" stroke-width="1"/><rect x="950.6" y="521.8" width="3" height="2.6" fill="#e06a5a"/><rect x="953.6" y="523.2" width="2.6" height="3" fill="#6fa0e0"/>
<rect x="964.5" y="520" width="9" height="8" fill="#ffffff" stroke="#b8b8b8" stroke-width="0.8"/>
<path d="M977.8 521.4H983L980.4 525.4Z" fill="#111"/>
</svg>
<!-- taskbar content -->
<svg class="abs" style="left:0;top:531px" width="999" height="31" viewBox="0 531 999 31" font-family="Liberation Sans, sans-serif">
<defs>
<linearGradient id="wg" x1="0" y1="0" x2="1" y2="1"><stop offset="0" stop-color="#4fb4f0"/><stop offset="1" stop-color="#0f74d0"/></linearGradient>
<linearGradient id="sun" x1="0" y1="0" x2="0" y2="1"><stop offset="0" stop-color="#f8b030"/><stop offset="1" stop-color="#f07a10"/></linearGradient>
</defs>
<!-- weather -->
<circle cx="20.8" cy="546" r="6.6" fill="url(#sun)"/>
<path d="M13.4 543.6Q13 541.4 15 541Q15.6 538.6 18 539Q20.4 539.2 20.6 541.4Q22.2 541.6 22 543.6Z" fill="#d4e0f6" stroke="#b8c8e8" stroke-width="0.4"/>
<path d="M20.6 552.2Q20.2 550 22.2 549.6Q22.8 547.6 25 548Q27.2 548.2 27.4 550.2Q29 550.4 28.8 552.2Z" fill="#dce6f8" stroke="#b8c8e8" stroke-width="0.4"/>
<text x="33.4" y="544.2" font-size="8.8" fill="#222" textLength="15.4" lengthAdjust="spacingAndGlyphs">70°F</text>
<text x="33.4" y="554.6" font-size="8.8" fill="#5a5a5a" textLength="42" lengthAdjust="spacingAndGlyphs">Partly sunny</text>
<!-- windows logo -->
<g fill="url(#wg)"><rect x="318.4" y="539.2" width="7.2" height="7.2"/><rect x="326.4" y="539.2" width="7.2" height="7.2"/><rect x="318.4" y="547.2" width="7.2" height="7.2"/><rect x="326.4" y="547.2" width="7.2" height="7.2"/></g>
<!-- search pill -->
<rect x="343" y="537" width="142" height="19.4" rx="9.7" fill="#eef4fa" stroke="#dde6ef" stroke-width="0.6"/>
<circle cx="353.6" cy="545.6" r="3.2" fill="none" stroke="#222" stroke-width="1.1"/><path d="M356 548L358.6 550.8" stroke="#222" stroke-width="1.2"/>
<text x="366.4" y="550" font-size="9.4" fill="#555" textLength="26.6" lengthAdjust="spacingAndGlyphs">Search</text>
<path d="M449 555.6L455 549H476L482 555.6Z" fill="#e8a868"/>
<path d="M454.6 545.6L464.4 543.4L466.6 551L456.6 553.4Z" fill="#f4f0e4" stroke="#5a8a5a" stroke-width="0.8"/><path d="M459.6 544.6L461.4 552.2" stroke="#9a9a8a" stroke-width="0.5"/>
<path d="M462 548.4L466.4 541.6L467.8 542.6L463.4 549.2Z" fill="#f0a020"/><circle cx="467.6" cy="541.4" r="1" fill="#e04040"/>
<path d="M450.6 540.4L452.2 541.8L450.8 543.2L449.4 541.8Z" fill="#d050e0"/><circle cx="480.4" cy="542.4" r="0.8" fill="#f0a020"/><circle cx="472.6" cy="544" r="0.6" fill="#40b0e0"/>
<path d="M471 552.6V544.4Q471 540.4 475.4 540.2Q479.8 540.4 479.8 544.4V552.6Z" fill="#3a7af0"/><rect x="472.2" y="548.2" width="6.4" height="4.4" rx="1" fill="#2a52c8"/><path d="M473.4 540.4Q475.4 537.4 477.4 540.4" fill="none" stroke="#2a52c8" stroke-width="0.9"/>
<!-- task view -->
<rect x="496.6" y="539.4" width="11.4" height="10" rx="1.2" fill="#f4f4f4" stroke="#d8d8d8" stroke-width="0.5"/><rect x="492.4" y="543.2" width="11.6" height="10.2" rx="1.2" fill="#1c1c1c"/><rect x="496.6" y="543.2" width="7.4" height="6.2" fill="#8a8a8a"/>
<!-- chat -->
<circle cx="529" cy="545.8" r="7.4" fill="#6a5fd8"/><path d="M522.6 549.6L521.8 553.6L526.4 552.4Z" fill="#6a5fd8"/>
<rect x="524.8" y="542.8" width="6" height="5.6" rx="1" fill="#fff"/><path d="M531 545L533.6 543.2V548.2L531 546.4Z" fill="#fff"/>
<!-- file explorer -->
<path d="M550.4 540.6Q550.4 539.6 551.4 539.6H556L557.6 541.2H565Q566 541.2 566 542.2V544H550.4Z" fill="#e8a820"/>
<rect x="550.4" y="542.4" width="15.6" height="11" rx="1" fill="#fcc93a"/><path d="M553.4 553.4V550.4Q553.4 549.4 554.4 549.4H562Q563 549.4 563 550.4V553.4Z" fill="#2a7ad8"/>
<rect x="556.4" y="556.6" width="3.4" height="1.4" rx="0.7" fill="#8a8a8a"/>
<!-- chrome 1 -->
<g id="chrome"><circle cx="586.8" cy="546" r="7.8" fill="#e8453c"/><path d="M586.8 546L580 549.9A7.8 7.8 0 0 0 586.8 553.8L590.7 547Z" fill="#34a853"/><path d="M586.8 546L580.05 549.9A7.8 7.8 0 0 1 580.05 542.1Z" fill="#34a853"/><path d="M586.8 546L590.2 552.9A7.8 7.8 0 0 0 594.4 544.2Z" fill="#fbbc05"/><path d="M586.8 553.8A7.8 7.8 0 0 0 593.55 542.1H586.8Z" fill="#fbbc05"/><path d="M580.05 542.1A7.8 7.8 0 0 1 593.55 542.1H586.8Z" fill="#e8453c"/><path d="M580.05 542.1L583.4 548A3.9 3.9 0 0 1 586.8 542.1Z" fill="#e8453c"/><circle cx="586.8" cy="546" r="3.6" fill="#fff"/><circle cx="586.8" cy="546" r="2.8" fill="#4285f4"/></g>
<use href="#chrome" x="28.2" y="0"/>
<circle cx="621.2" cy="540.4" r="5" fill="#5b2fb0"/><text x="621.2" y="542.6" font-size="6" fill="#e8e0f8" text-anchor="middle">J</text>
<rect x="613.4" y="556.6" width="3.4" height="1.4" rx="0.7" fill="#8a8a8a"/>
<!-- excel -->
<rect x="640" y="539.4" width="11.8" height="13.6" rx="1" fill="#21a366"/><rect x="640" y="539.4" width="11.8" height="3.4" fill="#33c481"/><rect x="640" y="546.2" width="11.8" height="3.4" fill="#107c41"/><rect x="640" y="549.6" width="11.8" height="3.4" fill="#185c37"/>
<rect x="636" y="542" width="8.8" height="8.8" rx="0.8" fill="#107c41"/><text x="640.4" y="549" font-size="6.4" font-weight="bold" fill="#fff" text-anchor="middle">X</text>
<rect x="642" y="556.6" width="3.4" height="1.4" rx="0.7" fill="#8a8a8a"/>
<!-- JMP active -->
<rect x="660.2" y="533.6" width="21.8" height="27" rx="2" fill="#eef3fa" stroke="#e4eaf2" stroke-width="0.6"/>
<path d="M665.6 539.6Q669 538 672.4 539.6V553Q669 554.6 665.6 553Z" fill="#2fae4a"/><path d="M665.6 543Q669 544.6 672.4 543M665.6 546.6Q669 548.2 672.4 546.6M665.6 550Q669 551.6 672.4 550" fill="none" stroke="#d8f0d8" stroke-width="0.7"/>
<circle cx="672.6" cy="542.6" r="1.4" fill="#111"/>
<path d="M668.4 548.6Q672 545 679.6 545.2Q675.4 546.6 674.6 548.6Q676.6 550.4 677.6 554Q674.6 551.4 672.6 550.8Q671.4 553 669 554.6Q670.6 551.4 670.6 549.2Z" fill="#1a74d0"/>
<rect x="667" y="557" width="9.6" height="1.7" rx="0.8" fill="#1a78d8"/>
<!-- tray -->
<path d="M847.4 548L850.6 544.8L853.8 548" fill="none" stroke="#222" stroke-width="1.1"/>
<path d="M866.4 545.4L874.6 541.8L871.6 550.2L870.2 546.6Z" fill="none" stroke="#2a5fd0" stroke-width="1" stroke-linejoin="round"/>
<g fill="none" stroke="#222" stroke-width="0.9"><path d="M886.6 544.6Q891.8 540 897 544.6"/><path d="M888.2 546.4Q891.8 543.2 895.4 546.4"/><path d="M889.8 548.2Q891.8 546.4 893.8 548.2"/></g><circle cx="891.8" cy="549.6" r="0.8" fill="#222"/>
<path d="M902.4 545H904.2L906.6 542.8V550.2L904.2 548H902.4Z" fill="none" stroke="#222" stroke-width="0.8" stroke-linejoin="round"/><path d="M908.2 544.6Q909.4 546.4 908.2 548.4M909.8 543.2Q911.8 546.4 909.8 549.8" fill="none" stroke="#222" stroke-width="0.8"/><path d="M911.2 542.4Q913.6 546.4 911.2 550.6" fill="none" stroke="#9a9a9a" stroke-width="0.7"/>
<rect x="918" y="543.6" width="8.6" height="5.6" rx="1.3" fill="none" stroke="#222" stroke-width="0.9"/><rect x="919.2" y="544.8" width="2.6" height="3.2" fill="#222"/><path d="M927.6 545.4V547.6" stroke="#222" stroke-width="1"/>
<text x="971" y="544.2" font-size="8.8" fill="#222" text-anchor="end" textLength="28.2" lengthAdjust="spacingAndGlyphs">7:31 PM</text>
<text x="971" y="554.6" font-size="8.8" fill="#222" text-anchor="end" textLength="32.4" lengthAdjust="spacingAndGlyphs">4/4/2023</text>
<path d="M977.6 549.4Q978.8 548.2 978.8 545.6Q978.8 542.4 981.6 542.4H983.4M984.6 546.4Q984.8 548.4 985.8 549.4H977.6M980.6 550.8Q981.6 551.8 982.8 550.8" fill="none" stroke="#222" stroke-width="0.8"/>
<text x="984.4" y="546" font-size="4.6" font-weight="bold" fill="#222" text-anchor="middle">z</text>
</svg>
<!--/BOTTOM-->
</div>
</body>
</html>
